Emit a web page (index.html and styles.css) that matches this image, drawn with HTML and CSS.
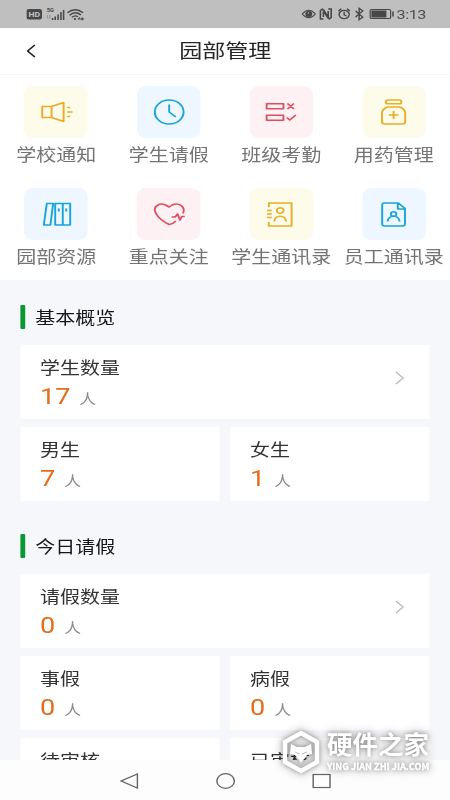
FILE: index.html
```html
<!DOCTYPE html>
<html lang="zh-CN">
<head>
<meta charset="utf-8">
<title>园部管理</title>
<link rel="stylesheet" href="styles.css">
</head>
<body>
<div class="phone">
  <div class="status">
    <svg class="status-left" viewBox="0 0 60 16">
      <rect x="0" y="3" width="13" height="10.5" rx="2" fill="#484848"/>
      <text x="1.7" y="11" font-size="7.5" font-weight="700" fill="#c4c4c4" textLength="9.6" lengthAdjust="spacingAndGlyphs">HD</text>
      <text x="17" y="6.5" font-size="6" font-weight="700" fill="#484848" textLength="6" lengthAdjust="spacingAndGlyphs">5G</text>
      <path d="M17.500 9v3.500M19.500 9v3.500" stroke="#999" stroke-width="1"/>
      <path d="M21.800 12v2M24 10.500V14M26.400 8.500V14M28.800 6V14M31 4V14" stroke="#484848" stroke-width="1.300" fill="none"/>
      <path d="M34.200 6.800Q40.700 0.800 47.200 6.800M36 9.200Q40.700 4.500 45.400 9M38 11.200Q40.500 8.700 43 10.700" stroke="#484848" stroke-width="1.300" fill="none"/>
      <circle cx="40.500" cy="13" r="1" fill="#484848"/>
      <path d="M43 13h4M44.500 11.500L43 13M46 11.500l1.500 1.500-1.500 1" stroke="#484848" stroke-width="1" fill="none"/>
    </svg>
    <div class="status-right">
      <svg class="status-icons" viewBox="0 0 78 16" fill="none" stroke="#484848" stroke-width="1">
        <path d="M.8 8Q6.300 0.500 11.800 8Q6.300 15.500.8 8Z"/><circle cx="6.300" cy="8" r="2.400" fill="#484848"/><path d="M5.500 7h1" stroke="#c0c0c0"/>
        <path d="M18.500 13H16V4.500L17.500 3l5 9.500V5M22.500 3H25v8.500L23.500 13l-5-9.500V11" stroke-width="1.300"/>
        <circle cx="35.800" cy="8.500" r="4.200" stroke-width="1.200"/><path d="M35.800 5.800V9l2 1M31 5l2.500-2.200M40.600 5l-2.500-2.200" stroke-width="1.200"/>
        <path d="M45.300 5l6 6.200-3 2.500V2.300l3 2.500-6 6.200" stroke-width="1.200"/>
        <rect x="57.500" y="3.500" width="17" height="9" rx="1"/><rect x="59" y="5" width="11.500" height="6" fill="#484848"/><path d="M76.500 5.500v5" stroke-width="1.300"/>
      </svg>
      <span>3:13</span>
    </div>
  </div>

  <header class="header">
    <svg class="back" viewBox="0 0 8 14"><path d="M7 1L1 7l6 6"/></svg>
    <h1>园部管理</h1>
  </header>

  <nav class="menu">
    <div class="item">
      <div class="tile yellow"><svg viewBox="0 0 30 30"><path d="M3.200 9.500H11v11H3.200zM11 9.500L21 5.500v19L11 20.500M24 10.500h2.500M24 15h4.500M24 19.500h2.500"/></svg></div>
      <span>学校通知</span>
    </div>
    <div class="item">
      <div class="tile blue"><svg viewBox="0 0 30 30"><circle cx="15" cy="15" r="12"/><path d="M15 7.500V15l5.500 5"/></svg></div>
      <span>学生请假</span>
    </div>
    <div class="item">
      <div class="tile red"><svg viewBox="0 0 30 30"><path d="M3.200 6.700h14v5h-14zM3.200 18.200h14v5h-14zM20.500 6.500l5.500 5.500M26 6.500L20.500 12M20 20.500l2.500 2.500 5-5"/></svg></div>
      <span>班级考勤</span>
    </div>
    <div class="item">
      <div class="tile yellow"><svg viewBox="0 0 30 30"><rect x="8.500" y="3" width="13" height="3.800" rx="1.900"/><path d="M10 10h10q4.500 2 4.700 6v8.500q0 2.500-2.500 2.500H7.800q-2.500 0-2.500-2.500V16q.2-4 4.700-6zM15 14v8M11 18h8"/></svg></div>
      <span>用药管理</span>
    </div>
    <div class="item">
      <div class="tile blue"><svg viewBox="0 0 30 30"><path d="M7 4.500h5.300L10 26H4.500zM14 4.500h6.300V26H14zM20.300 4.500h6.200V26h-6.200zM17 9.500v3M23.200 9.500v3"/></svg></div>
      <span>园部资源</span>
    </div>
    <div class="item">
      <div class="tile red"><svg viewBox="0 0 30 30"><path d="M26.500 14.500C29 8 23 3 17.500 6L15 8 12 6C6 3 .8 8.500 4 14.500c2 4.500 6.500 8.500 11 11 2-.3 4-1.500 5.500-3.500M17 18h3l2-3 2 6 1.500-3.500H28"/></svg></div>
      <span>重点关注</span>
    </div>
    <div class="item">
      <div class="tile yellow"><svg viewBox="0 0 30 30"><path d="M5 8V4h19v23H5v-4M3.500 11.500h4M3.500 15h4M3.500 18.500h4M9.500 22.500c.5-7 9.500-7 10 0"/><circle cx="14.500" cy="11.500" r="2.800"/></svg></div>
      <span>学生通讯录</span>
    </div>
    <div class="item">
      <div class="tile blue"><svg viewBox="0 0 30 30"><path d="M7 4h12l5.500 5.500V25q0 2-2 2H7.500q-2 0-2-2V6q0-2 1.500-2zM18.500 4v6h6M10 22.500c.5-7 9.500-7 10 0"/><circle cx="15" cy="15" r="2.300"/></svg></div>
      <span>员工通讯录</span>
    </div>
  </nav>

  <main class="content">
    <section>
      <h2>基本概览</h2>
      <div class="cards">
        <div class="card wide"><div><h3>学生数量</h3><p><b>17</b>人</p></div><svg class="more" viewBox="0 0 8 14"><path d="M1 1l6 6-6 6"/></svg></div>
        <div class="card"><div><h3>男生</h3><p><b>7</b>人</p></div></div>
        <div class="card"><div><h3>女生</h3><p><b>1</b>人</p></div></div>
      </div>
    </section>
    <section>
      <h2>今日请假</h2>
      <div class="cards">
        <div class="card wide"><div><h3>请假数量</h3><p><b>0</b>人</p></div><svg class="more" viewBox="0 0 8 14"><path d="M1 1l6 6-6 6"/></svg></div>
        <div class="card"><div><h3>事假</h3><p><b>0</b>人</p></div></div>
        <div class="card"><div><h3>病假</h3><p><b>0</b>人</p></div></div>
        <div class="card"><div><h3>待审核</h3></div></div>
        <div class="card"><div><h3>已审核</h3></div></div>
      </div>
    </section>
  </main>

  <footer class="navbar">
    <svg viewBox="0 0 16 16"><path d="M14.500 1v14L1 8z"/></svg>
    <svg viewBox="0 0 16 16"><circle cx="8" cy="8" r="7.300"/></svg>
    <svg viewBox="0 0 16 16"><rect x="1" y="1.500" width="14" height="13"/></svg>
  </footer>
</div>

<div class="watermark">
  <svg viewBox="0 0 40 44"><path d="M20 3L36 12v20L20 41 4 32V12z" fill="none" stroke="#fff" stroke-width="4.500"/><path d="M10 14l6 3h8l6-3 1 10-5 1-6 8-6-8-5-1z" fill="#fff"/><path d="M14 22l5 2M26 22l-5 2" stroke="#bbb" stroke-width="1"/></svg>
  <div class="brand"><strong>硬件之家</strong><small>YING JIAN ZHI JIA.COM</small></div>
</div>
</body>
</html>
```
FILE: styles.css
```css
* {
  box-sizing: border-box;
  margin: 0;
  padding: 0;
}

body {
  width: 450px;
  height: 800px;
  overflow: hidden;
  background: #fff;
  font-family: Roboto, "Noto Sans CJK SC", sans-serif;
}

/* 375-unit layout widened to the 450px viewport */
.phone {
  display: flex;
  flex-direction: column;
  width: 375px;
  height: 800px;
  overflow: hidden;
  transform: scaleX(1.2);
  transform-origin: 0 0;
}

.status {
  display: flex;
  flex: none;
  justify-content: space-between;
  height: 28px;
  padding: 6px 21px 6px 21.500px;
  background: #bfbfbf;
}

.status-left {
  width: 60px;
  height: 16px;
}

.status-right {
  display: flex;
  gap: 2px;
  color: #505050;
  font-size: 13.500px;
  line-height: 17px;
}

.status-icons {
  width: 78px;
  height: 16px;
}

.status-right span {
  width: 23.500px;
  letter-spacing: -0.4px;
  white-space: nowrap;
}

.header {
  display: flex;
  flex: none;
  align-items: center;
  height: 47px;
  padding: 0 21.500px;
  border-bottom: 1px solid #f5f5f5;
}

.back,
.more {
  width: 8px;
  height: 14px;
  fill: none;
  stroke: #222;
  stroke-width: 1.4;
}

.header h1 {
  flex: 1;
  margin-right: 7.500px;
  padding-top: 2px;
  color: #252525;
  font-size: 19.200px;
  font-weight: 400;
  line-height: 28px;
  text-align: center;
}

.menu {
  display: grid;
  flex: none;
  grid-template-columns: repeat(4, 1fr);
  grid-auto-rows: 102.500px;
  height: 205px;
  padding-top: 10.500px;
}

.item {
  display: flex;
  flex-direction: column;
  align-items: center;
  color: #747474;
  font-size: 16.670px;
  line-height: 24px;
  white-space: nowrap;
}

.item span {
  margin-top: 6px;
}

.tile {
  display: grid;
  place-items: center;
  width: 53px;
  height: 52px;
  border-radius: 8px;
}

.tile svg {
  width: 30px;
  height: 30px;
  fill: none;
  stroke: currentColor;
  stroke-width: 1.6;
  stroke-linejoin: round;
}

.yellow { color: #e9ad26; background: #fdfbe9; }
.blue { color: #18a5d5; background: #eef7ff; }
.red { color: #df4f62; background: #fdf1f4; }

.item span {
  color: #747474;
}

.content {
  flex: 1;
  min-height: 0;
  overflow: hidden;
  padding: 0 16.670px;
  background: #f6f7fa;
}

section h2 {
  display: flex;
  align-items: center;
  gap: 8.500px;
  height: 65px;
  padding-top: 9px;
  color: #161616;
  font-size: 16.670px;
  font-weight: 400;
}

section + section h2 {
  height: 73px;
  padding-top: 16px;
}

section h2::before {
  content: "";
  width: 4.200px;
  height: 24px;
  border-radius: 1px;
  background: #079832;
}

.cards {
  display: grid;
  grid-template-columns: 1fr 1fr;
  gap: 8px 8.330px;
}

.card {
  display: flex;
  align-items: flex-start;
  justify-content: space-between;
  height: 74px;
  padding: 12px 21.500px 0 16.670px;
  background: #fff;
}

.wide {
  grid-column: 1 / -1;
}

.card h3 {
  color: #333;
  font-size: 16.670px;
  font-weight: 400;
  line-height: 24px;
}

.card p {
  margin-top: -1px;
  color: #8a8a8a;
  font-size: 14px;
  line-height: 32px;
}

.card b {
  margin-right: 7.500px;
  color: #e56c18;
  font-size: 22.500px;
  font-weight: 400;
}

.more {
  margin-top: 13.500px;
  stroke: #bbb;
  stroke-width: 1.1;
}

.navbar {
  display: flex;
  flex: none;
  align-items: center;
  justify-content: center;
  gap: 64px;
  height: 40px;
  padding-top: 1px;
  background: #fdfdfd;
}

.navbar svg {
  width: 16px;
  height: 16px;
  fill: none;
  stroke: #666;
  stroke-width: 1.2;
}

.watermark {
  position: absolute;
  left: 281px;
  top: 730px;
  display: flex;
  align-items: center;
  gap: 6px;
  color: #fff;
  filter: drop-shadow(0 0 2px rgba(0, 0, 0, 0.3)) drop-shadow(0 0 5px rgba(0, 0, 0, 0.35));
}

.watermark svg {
  width: 40px;
  height: 44px;
}

.brand strong {
  display: block;
  font-size: 25.500px;
  font-weight: 700;
  line-height: 28px;
  white-space: nowrap;
}

.brand small {
  display: block;
  font-family: "Noto Sans CJK SC", sans-serif;
  font-size: 9.200px;
  font-weight: 700;
  line-height: 14px;
  white-space: nowrap;
  -webkit-text-stroke: 0.3px #fff;
}
```
